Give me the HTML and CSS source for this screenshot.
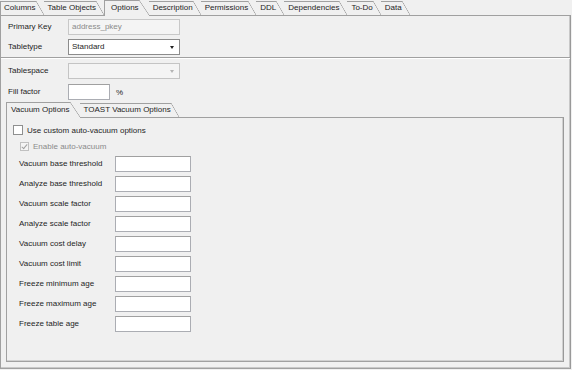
FILE: index.html
```html
<!DOCTYPE html>
<html lang="en">
<head>
  <meta charset="UTF-8">
  <title>Table Options</title>
  <meta name="viewport" content="width=device-width, initial-scale=1.0">
  <link rel="stylesheet" href="styles.css">
</head>
<body>
  <div class="notebook">
    <div class="tabs">
      <span class="tab first">Columns</span>
      <span class="tab">Table Objects</span>
      <span class="tab active">Options</span>
      <span class="tab">Description</span>
      <span class="tab">Permissions</span>
      <span class="tab">DDL</span>
      <span class="tab">Dependencies</span>
      <span class="tab">To-Do</span>
      <span class="tab">Data</span>
    </div>
    <div class="page">
      <div class="grid top">
        <label>Primary Key</label>
        <div class="field disabled">address_pkey</div>
        <label>Tabletype</label>
        <div class="combo">Standard<span class="arrow"></span></div>
      </div>
      <div class="sep"></div>
      <div class="grid second">
        <label>Tablespace</label>
        <div class="combo disabled"><span class="arrow"></span></div>
        <label>Fill factor</label>
        <div class="unit"><div class="field small"></div><span>%</span></div>
      </div>

      <div class="subbook">
        <div class="tabs">
          <span class="tab first active">Vacuum Options</span>
          <span class="tab">TOAST Vacuum Options</span>
        </div>
        <div class="subpage">
          <div class="check"><span class="box"></span>Use custom auto-vacuum options</div>
          <div class="check indent disabled"><span class="box checked"></span>Enable auto-vacuum</div>
          <div class="grid vacuum">
            <label>Vacuum base threshold</label><div class="field"></div>
            <label>Analyze base threshold</label><div class="field"></div>
            <label>Vacuum scale factor</label><div class="field"></div>
            <label>Analyze scale factor</label><div class="field"></div>
            <label>Vacuum cost delay</label><div class="field"></div>
            <label>Vacuum cost limit</label><div class="field"></div>
            <label>Freeze minimum age</label><div class="field"></div>
            <label>Freeze maximum age</label><div class="field"></div>
            <label>Freeze table age</label><div class="field"></div>
          </div>
        </div>
      </div>
    </div>
  </div>
</body>
</html>
```

FILE: styles.css
```css
* { box-sizing: border-box; }
body { margin: 0; background: #f0f0f0; color: #1e1e1e; font-family: "Liberation Sans", Arial, sans-serif; font-size: 8px; }

.notebook { width: 571px; }
.tabs { display: flex; height: 15px; }
.tab { position: relative; height: 14px; margin-top: 1px; padding: 0 8px 0 4px; line-height: 13px; white-space: nowrap; }
.tab::before { content: ''; position: absolute; top: 0; left: 0; right: 8px; border-top: 1px solid #a0a0a0; }
.tab::after { content: ''; position: absolute; top: 0; right: 0; width: 8px; height: 100%;
  background: linear-gradient(to top right, transparent calc(50% - 0.6px), #a0a0a0 50%, transparent calc(50% + 0.6px)); }
.tab.first { border-left: 1px solid #a0a0a0; padding-left: 3px; }
.tab.active { height: 16px; margin-top: 0; padding: 1px 10px 0 6px; background: #f0f0f0; border-left: 1px solid #a0a0a0; z-index: 1; }
.tab.active::after { width: 10px; height: 15px; }
.tab.active::before { right: 10px; }
.tab.first.active { padding-left: 4px; }

.page { height: 354px; border: 1px solid #a0a0a0; border-right-color: #999; box-shadow: inset -1px -1px 0 #c8c8c8; padding-top: 3px; }

.grid { display: grid; align-items: center; }
.grid label { height: 16px; line-height: 16px; }
.top, .second { grid-template-columns: 60px 112px; padding-left: 7px; }
.top { row-gap: 4px; }
.second { row-gap: 5px; }
.sep { margin: 2px 0 4px; border-top: 1px solid #a0a0a0; border-bottom: 1px solid #fff; }

.field, .combo { position: relative; height: 16px; line-height: 14px; padding-left: 3px; background: #fff; border: 1px solid #abadb3; border-top-color: #a0a0a0; white-space: nowrap; }
.field.disabled { background: #f4f4f4; border-color: #c8c8c8; color: #8a8a8a; }
.combo { border-color: #8c8c8c; }
.combo.disabled { background: #f4f4f4; border-color: #c4c4c4; }
.arrow { position: absolute; right: 5px; top: 6px; border-left: 2.5px solid transparent; border-right: 2.5px solid transparent; border-top: 3px solid #222; }
.combo.disabled .arrow { border-top-color: #b4b4b4; }
.unit { display: flex; align-items: center; gap: 6px; }
.field.small { width: 42px; }

.subbook { margin: 2px 6px 0 5px; }
.subpage { height: 245px; border: 1px solid #a0a0a0; border-right-color: #999; box-shadow: inset -1px -1px 0 #d0d0d0; padding: 4px 0 0 6px; }

.check { display: flex; align-items: center; height: 16px; gap: 4px; }
.check.indent { padding-left: 7px; }
.check.disabled { color: #8a8a8a; }
.box { position: relative; width: 10px; height: 10px; background: #fff; border: 1px solid #8e8f8f; }
.check.disabled .box { width: 9px; height: 9px; background: #f4f4f4; border-color: #c0c0c0; }
.box.checked::after { content: ''; position: absolute; left: 2px; top: 0; width: 2px; height: 5px; border: solid #a0a0a0; border-width: 0 1px 1px 0; transform: rotate(40deg); }

.vacuum { margin-top: 2px; padding-left: 6px; grid-template-columns: 96px 76px; row-gap: 4px; }
```
